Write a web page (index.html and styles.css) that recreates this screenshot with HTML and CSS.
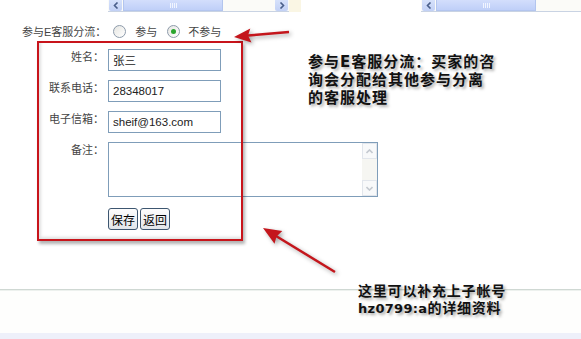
FILE: index.html
```html
<!DOCTYPE html>
<html lang="zh-cn">

<head>
    <meta charset="UTF-8">
    <meta name="viewport" content="width=device-width, initial-scale=1.0">
    <title>子帐号资料</title>
    <link rel="stylesheet" href="styles.css">
</head>

<body>
    <div class="page">
        <div class="topbar">
            <div class="hscroll first">
                <span class="sb-btn"><svg width="6" height="7" viewBox="0 0 6 7"><polyline points="4.5,0.5 1.5,3.5 4.5,6.5" /></svg></span>
                <span class="sb-thumb"><i></i></span>
                <span class="sb-track"></span>
                <span class="sb-btn"><svg width="6" height="7" viewBox="0 0 6 7"><polyline points="1.5,0.5 4.5,3.5 1.5,6.5" /></svg></span>
            </div>
            <div class="tint"></div>
            <div class="hscroll second">
                <span class="sb-btn"><svg width="6" height="7" viewBox="0 0 6 7"><polyline points="4.5,0.5 1.5,3.5 4.5,6.5" /></svg></span>
                <span class="sb-thumb"><i></i></span>
                <span class="sb-track"></span>
            </div>
        </div>

        <div class="share">
            <span>参与E客服分流：</span>
            <span class="radio"></span>
            <span class="opt">参与</span>
            <span class="radio checked"></span>
            <span class="opt opt2">不参与</span>
        </div>

        <div class="form-wrap">
            <div class="fields">
                <label class="lbl">姓名：</label>
                <input class="txt" type="text" value="张三">

                <label class="lbl">联系电话：</label>
                <input class="txt" type="text" value="28348017">

                <label class="lbl">电子信箱：</label>
                <input class="txt" type="text" value="sheif@163.com">

                <label class="lbl">备注：</label>
                <div class="memo">
                    <textarea></textarea>
                    <div class="vbar">
                        <span class="vb-btn"><svg width="7" height="5" viewBox="0 0 7 5"><polyline points="0.5,4 3.5,1 6.5,4" /></svg></span>
                        <span class="vb-btn"><svg width="7" height="5" viewBox="0 0 7 5"><polyline points="0.5,1 3.5,4 6.5,1" /></svg></span>
                    </div>
                </div>

                <span></span>
                <div class="actions">
                    <button>保存</button>
                    <button>返回</button>
                </div>
            </div>
        </div>

        <div class="divider"></div>
        <div class="footer"></div>
        <div class="band"></div>

        <div class="note note-a">参与E客服分流：买家的咨<br>询会分配给其他参与分离<br>的客服处理</div>
        <div class="note note-b">这里可以补充上子帐号<br><span class="latin">hz0799:a</span>的详细资料</div>

        <svg class="arrows" width="581" height="339" viewBox="0 0 581 339">
            <line x1="289" y1="32" x2="248" y2="35.6" />
            <polygon points="234,37 250.3,28.5 248,35.6 251.5,42.5" />
            <line x1="335" y1="272" x2="276" y2="236" />
            <polygon points="263,228 282.3,231 276.5,236.5 274.5,243.8" />
        </svg>
    </div>
</body>

</html>
```

FILE: styles.css
```css
html,
body {
    margin: 0;
    background: #fff;
    font-family: 'Liberation Sans', 'Noto Sans CJK SC', sans-serif;
    font-size: 11px;
    color: #333;
    text-spacing-trim: space-all;
}

.page {
    position: relative;
    width: 581px;
    height: 339px;
    overflow: hidden;
}

/* scroll bars cut at the top */
.topbar {
    display: flex;
    height: 12px;
}

.hscroll {
    display: flex;
    height: 11px;
    background: #fbfbf8;
    border-bottom: 1px solid #c9d3e3;
}

.first {
    width: 181px;
    margin-left: 108px;
}

.second {
    flex: 1;
    margin-left: 120px;
}

.tint {
    width: 12px;
    background: #faf6e4;
}

.sb-btn {
    width: 13px;
    margin: 0 1px;
    display: flex;
    align-items: center;
    justify-content: center;
    background: linear-gradient(#d6e1fb, #c2d1f5);
    border-radius: 0 0 2px 2px;
}

.sb-btn svg polyline,
.vb-btn svg polyline {
    fill: none;
    stroke: #4a5f8a;
    stroke-width: 1.6;
}

.sb-thumb {
    width: 98px;
    display: flex;
    align-items: center;
    justify-content: center;
    background: linear-gradient(#d3defc, #bfcff8);
    border: 1px solid #b3c5ee;
    border-top: 0;
}

.sb-thumb i {
    width: 7px;
    height: 5px;
    background: repeating-linear-gradient(90deg, #f1f5ff 0 1px, transparent 1px 2px);
}

.sb-track {
    flex: 1;
}

/* share option row */
.share {
    display: flex;
    align-items: center;
    height: 16px;
    margin: 11px 0 0 22px;
    color: #444;
}

.radio {
    width: 11px;
    height: 11px;
    margin-left: 7px;
    border: 1px solid #8d9bab;
    border-radius: 50%;
    background: linear-gradient(135deg, #e6e6e2, #fff);
    display: flex;
    align-items: center;
    justify-content: center;
}

.radio.checked {
    margin-left: 10px;
}

.radio.checked::before {
    content: '';
    width: 5px;
    height: 5px;
    border-radius: 50%;
    background: #2aa52e;
}

.opt {
    margin-left: 9px;
}

.opt2 {
    margin-left: 8px;
}

/* form with the red frame drawn on top */
.form-wrap {
    position: relative;
    width: 206px;
    height: 200px;
    margin: 2px 0 0 37px;
    padding: 8px 0 0 2px;
    box-sizing: border-box;
}

.form-wrap::after {
    content: '';
    position: absolute;
    inset: 0;
    border: 2px solid #c8141b;
    box-shadow: 2px 3px 3px rgba(0, 0, 0, 0.3), inset 2px -2px 3px rgba(0, 0, 0, 0.12);
    pointer-events: none;
}

.fields {
    display: grid;
    grid-template-columns: 65px 133px;
    column-gap: 4px;
    row-gap: 9px;
}

.lbl {
    text-align: right;
    line-height: 16px;
    white-space: nowrap;
    color: #444;
}

.txt {
    width: 113px;
    height: 22px;
    margin: 0;
    padding: 0 4px;
    box-sizing: border-box;
    border: 1px solid #7f9db9;
    font-family: 'Liberation Sans', 'Noto Sans CJK SC', sans-serif;
    font-size: 11.5px;
    color: #222;
}

.memo {
    display: flex;
    width: 270px;
    height: 55px;
    box-sizing: border-box;
    border: 1px solid #7f9db9;
    background: #fff;
}

.memo textarea {
    flex: 1;
    border: 0;
    resize: none;
    outline: none;
}

.vbar {
    width: 15px;
    display: flex;
    flex-direction: column;
    justify-content: space-between;
    background: #f6f6f2;
}

.vb-btn {
    height: 14px;
    display: flex;
    align-items: center;
    justify-content: center;
    border: 1px solid #e2e6ec;
    background: #f8f9fa;
}

.vb-btn svg polyline {
    stroke: #c4c9d0;
}

.actions {
    display: flex;
    gap: 2px;
    margin-top: 2px;
}

.actions button {
    width: 30px;
    height: 22px;
    padding: 0;
    border: 1px solid #3d5670;
    border-radius: 3px;
    background: linear-gradient(#fdfdfd, #e2e6ea);
    font-family: 'Liberation Sans', 'Noto Sans CJK SC', sans-serif;
    font-size: 12px;
    color: #000;
}

/* bottom of the page */
.divider {
    height: 1px;
    margin-top: 48px;
    background: #cfd8d3;
    border-bottom: 1px solid #edf1ee;
}

.footer {
    height: 42px;
    background: #fefefd;
}

.band {
    height: 6px;
    background: #eef0fa;
}

/* annotations */
.note {
    position: absolute;
    white-space: nowrap;
    font-family: 'DejaVu Sans', 'Noto Sans CJK SC', sans-serif;
    font-weight: bold;
    color: #111;
    text-shadow: 2px 2px 3px rgba(0, 0, 0, 0.35);
}

.note-a {
    left: 308px;
    top: 53px;
    font-size: 15px;
    line-height: 18px;
    letter-spacing: 1px;
}

.note-b {
    left: 358px;
    top: 283px;
    font-size: 14px;
    line-height: 17px;
    letter-spacing: 0.8px;
}

.note-b .latin {
    font-size: 13px;
    letter-spacing: 0.3px;
}

.arrows {
    position: absolute;
    left: 0;
    top: 0;
    pointer-events: none;
    filter: drop-shadow(2px 2px 2px rgba(0, 0, 0, 0.35));
}

.arrows line {
    stroke: #c4161c;
    stroke-width: 2.5;
}

.arrows polygon {
    fill: #c4161c;
}
```
